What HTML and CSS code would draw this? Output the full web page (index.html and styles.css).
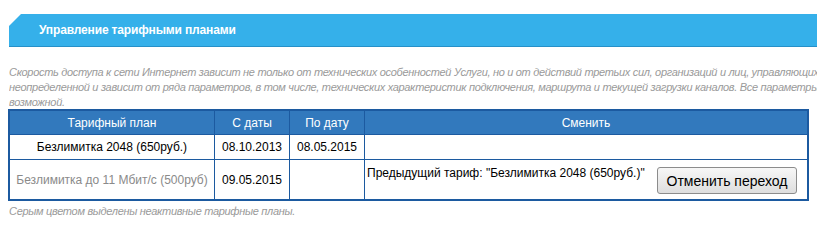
FILE: index.html
```html
<!DOCTYPE html>
<html lang="ru">
<head>
<meta charset="utf-8">
<title>Управление тарифными планами</title>
<link rel="stylesheet" href="styles.css">
</head>
<body>
<div class="page">
  <div class="panel-head">
    <h2 class="panel-title">Управление тарифными планами</h2>
  </div>
  <p class="note">Скорость доступа к сети Интернет зависит не только от технических особенностей Услуги, но и от действий третьих сил, организаций и лиц, управляющих сегментами сети,<br>неопределенной и зависит от ряда параметров, в том числе, технических характеристик подключения, маршрута и текущей загрузки каналов. Все параметры<br>возможной.</p>
  <table class="plans">
    <thead>
      <tr>
        <th class="c-plan">Тарифный план</th>
        <th class="c-date">С даты</th>
        <th class="c-date">По дату</th>
        <th class="c-change">Сменить</th>
      </tr>
    </thead>
    <tbody>
      <tr class="row-active">
        <td>Безлимитка 2048 (650руб.)</td>
        <td>08.10.2013</td>
        <td>08.05.2015</td>
        <td></td>
      </tr>
      <tr class="row-pending">
        <td class="inactive">Безлимитка до 11 Мбит/с (500руб)</td>
        <td>09.05.2015</td>
        <td></td>
        <td class="change-cell"><button class="btn" type="button">Отменить переход</button><span class="prev">Предыдущий тариф: "Безлимитка 2048 (650руб.)"</span></td>
      </tr>
    </tbody>
  </table>
  <p class="note footnote">Серым цветом выделены неактивные тарифные планы.</p>
</div>
</body>
</html>
```

FILE: styles.css
```css
html, body {
  margin: 0;
  padding: 0;
  background: #ffffff;
  overflow: hidden;
}

.page {
  width: 817px;
  padding: 14px 0 0 8px;
  box-sizing: border-box;
  font-family: "Liberation Sans", Arial, sans-serif;
}

.panel-head {
  margin-left: 1px;
  margin-right: -8px;
  height: 32px;
  background: #35b0ea;
  border-bottom: 1px solid #2690c8;
  clip-path: polygon(12px 0, 100% 0, 100% 100%, 0 100%, 0 12px);
  display: flex;
  align-items: center;
  padding-left: 30px;
}

.panel-title {
  margin: 0;
  font-size: 12px;
  letter-spacing: -0.15px;
  font-weight: bold;
  color: #ffffff;
}

.note {
  margin: 18px 0 0 1px;
  font-size: 11px;
  letter-spacing: -0.31px;
  line-height: 15px;
  font-style: italic;
  color: #9a9a9a;
  white-space: nowrap;
  overflow: hidden;
}

.plans {
  margin-top: -1px;
  width: 801px;
  border-collapse: collapse;
  border: 2px solid #1c5aa0;
  font-size: 12px;
}

.plans th,
.plans td {
  border: 1px solid #1c5aa0;
  text-align: center;
  vertical-align: middle;
  padding: 0 4px;
}

.plans th {
  background: #3279bd;
  color: #ffffff;
  font-weight: normal;
  height: 23px;
}

.c-plan { width: 196px; }
.c-date { width: 66px; }

.row-active td {
  height: 24px;
  color: #000000;
}

.row-pending td {
  color: #000000;
}

.plans td.inactive {
  color: #8a8a8a;
}

.plans td.change-cell {
  text-align: left;
  vertical-align: top;
  padding: 6px 10px 5px 2px;
}

.prev {
  display: block;
  line-height: 15px;
}

.btn {
  float: right;
  width: 140px;
  height: 27px;
  margin-top: 1px;
  padding: 0;
  font-family: "Liberation Sans", Arial, sans-serif;
  font-size: 14px;
  color: #000000;
  border: 1px solid #8c8c8c;
  border-radius: 3px;
  background: linear-gradient(#f7f7f7, #dedede);
}

.footnote {
  margin-top: 3px;
}
```
